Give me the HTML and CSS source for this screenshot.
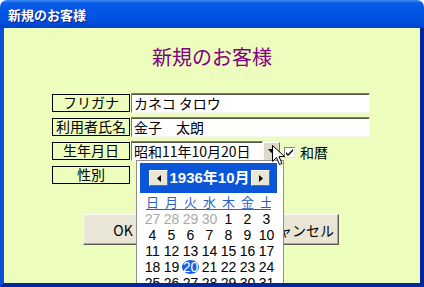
FILE: index.html
```html
<!DOCTYPE html>
<html lang="ja">
<head>
    <meta charset="UTF-8">
    <meta name="viewport" content="width=device-width, initial-scale=1.0">
    <title>新規のお客様</title>
    <link rel="stylesheet" href="styles.css">
</head>
<body>

<div class="window">
    <div class="titlebar">新規のお客様</div>

    <div class="content">
        <h1>新規のお客様</h1>

        <!-- 入力フォーム -->
        <div class="form">
            <div class="row">
                <div class="label">フリガナ</div>
                <input type="text" class="field" value="カネコ タロウ">
            </div>
            <div class="row">
                <div class="label">利用者氏名</div>
                <input type="text" class="field" value="金子　太朗">
            </div>
            <div class="row">
                <div class="label">生年月日</div>
                <input type="text" class="field date" value="昭和11年10月20日">
                <div class="drop">
                    <svg width="7" height="4" viewBox="0 0 7 4"><path d="M0 0h7L3.5 4z" fill="#000"/></svg>
                </div>
                <div class="check">
                    <svg width="9" height="9" viewBox="0 0 9 9"><path d="M1 4l2 2 5-5v2L3 8 1 6z" fill="#000"/></svg>
                </div>
                <span class="check-text">和暦</span>
            </div>
            <div class="row">
                <div class="label">性別</div>
            </div>
        </div>

        <div class="buttons">
            <button class="btn">OK</button>
            <button class="btn">キャンセル</button>
        </div>

        <!-- カレンダー -->
        <div class="calendar">
            <div class="cal-head">
                <div class="arrow">
                    <svg width="4" height="7" viewBox="0 0 4 7"><path d="M4 0v7L0 3.5z" fill="#000"/></svg>
                </div>
                <span class="cal-title">1936年10月</span>
                <div class="arrow">
                    <svg width="4" height="7" viewBox="0 0 4 7"><path d="M0 0v7l4-3.5z" fill="#000"/></svg>
                </div>
            </div>
            <div class="week">
                <span>日</span><span>月</span><span>火</span><span>水</span><span>木</span><span>金</span><span>土</span>
            </div>
            <div class="days">
                <span class="other">27</span><span class="other">28</span><span class="other">29</span><span class="other">30</span><span>1</span><span>2</span><span>3</span>
                <span>4</span><span>5</span><span>6</span><span>7</span><span>8</span><span>9</span><span>10</span>
                <span>11</span><span>12</span><span>13</span><span>14</span><span>15</span><span>16</span><span>17</span>
                <span>18</span><span>19</span><span><b class="today">20</b></span><span>21</span><span>22</span><span>23</span><span>24</span>
                <span>25</span><span>26</span><span>27</span><span>28</span><span>29</span><span>30</span><span>31</span>
            </div>
        </div>
    </div>

    <!-- マウスカーソル -->
    <svg class="cursor" width="13" height="21" viewBox="0 0 13 21">
        <path d="M0.5 0.5v16l4-4 3 7 2.5-1-3-7h5.5z" fill="#fff" stroke="#000" stroke-width="1"/>
    </svg>
</div>

</body>
</html>
```

FILE: styles.css
```css
html, body {
    margin: 0;
    padding: 0;
    background: #fff;
}
body {
    font-family: "Noto Sans CJK JP", "Liberation Sans", sans-serif;
    font-size: 14px;
}
.window {
    position: relative;
    width: 424px;
    height: 287px;
    display: flex;
    flex-direction: column;
    border-radius: 7px 7px 0 0;
    overflow: hidden;
}
.titlebar {
    height: 28px;
    flex-shrink: 0;
    padding-left: 8px;
    line-height: 29px;
    color: #fff;
    font-size: 13px;
    font-weight: bold;
    text-shadow: 1px 1px 0 #0a1f8a;
    background: linear-gradient(#3d8ef6 0, #0a5de4 3px, #0055e5 40%, #004fdc 80%, #0041c4 100%);
}
.content {
    position: relative;
    flex: 1;
    overflow: hidden;
    background: #edfdbe;
    border-style: solid;
    border-width: 0 4px 4px 4px;
    border-color: #0040c8 #00249c #00289c #0a4fd8;
}
h1 {
    margin: 0;
    padding-top: 17px;
    text-align: center;
    font-size: 20px;
    line-height: 24px;
    font-weight: normal;
    color: #800080;
}
.form {
    margin: 24px 0 0 48px;
    display: flex;
    flex-direction: column;
    gap: 4px;
}
.row {
    height: 20px;
    display: flex;
    align-items: center;
}
.label {
    width: 78px;
    height: 18px;
    box-sizing: border-box;
    border: 1px solid #000;
    margin-right: 1px;
    text-align: center;
    line-height: 15px;
}
.field {
    width: 239px;
    height: 20px;
    box-sizing: border-box;
    margin: 0;
    padding: 0 2px;
    font-family: "Noto Sans CJK JP", sans-serif;
    font-size: 14px;
    color: #000;
    background: #fff;
    border: 1px solid;
    border-color: #7c7c70 #f6f6ef #f6f6ef #7c7c70;
    box-shadow: inset 0 1px 0 #55554c;
    outline: none;
}
.field.date {
    width: 132px;
}
.drop {
    width: 17px;
    height: 19px;
    box-sizing: border-box;
    display: flex;
    align-items: center;
    justify-content: center;
    background: #ddd9c8;
    border: 1px solid;
    border-color: #fff #716f64 #716f64 #fff;
}
.check {
    width: 11px;
    height: 11px;
    margin: 3px 0 0 4px;
    box-sizing: border-box;
    display: flex;
    align-items: center;
    justify-content: center;
    background: #fff;
    border: 1px solid;
    border-color: #808080 #e0e0e0 #e0e0e0 #808080;
}
.check-text {
    margin: 2px 0 0 5px;
}
.buttons {
    margin-top: 29px;
    display: flex;
    justify-content: center;
    gap: 96px;
    padding-right: 2px;
}
.btn {
    width: 80px;
    height: 31px;
    padding: 0;
    font-family: "Noto Sans CJK JP", sans-serif;
    font-size: 14px;
    color: #000;
    background: #e9e6d6;
    border: 1px solid;
    border-color: #fbfaf5 #5e5c52 #5e5c52 #fbfaf5;
    box-shadow: inset -1px -1px 0 #aca899;
}
.calendar {
    position: absolute;
    left: 132px;
    top: 132px;
    width: 148px;
    height: 140px;
    box-sizing: border-box;
    padding: 2px 6px 0 3px;
    background: #fff;
    border: 1px solid #8f8f8f;
}
.cal-head {
    height: 30px;
    display: flex;
    align-items: center;
    justify-content: space-between;
    padding: 0 7px 0 9px;
    background: #0a55d8;
}
.arrow {
    width: 19px;
    height: 16px;
    box-sizing: border-box;
    display: flex;
    align-items: center;
    justify-content: center;
    background: #e9e6d6;
    border: 1px solid;
    border-color: #fff #716f64 #716f64 #fff;
}
.cal-title {
    color: #fff;
    font-family: "Liberation Sans", "Noto Sans CJK JP", sans-serif;
    font-weight: bold;
    font-size: 15px;
    line-height: 18px;
}
.week {
    display: grid;
    grid-template-columns: repeat(7, 19px);
    margin: 2px 3px 0 3px;
    height: 14px;
    line-height: 14px;
    font-size: 13px;
    color: #2762c8;
    text-align: center;
    box-shadow: 0 1px 0 #2762c8;
    clip-path: inset(0 3px -1px 3px);
}
.days {
    display: grid;
    grid-template-columns: repeat(7, 19px);
    margin: 2px 0 0 3px;
    font-family: "Liberation Sans", sans-serif;
    font-size: 14px;
    line-height: 16px;
    text-align: center;
}
.days .other {
    color: #a8a8a8;
}
.today {
    display: inline-block;
    font-weight: normal;
    color: #fff;
    background: #1a5fdc;
    border-radius: 50%;
    padding: 0 1px;
    line-height: 14px;
}
.cursor {
    position: absolute;
    left: 272px;
    top: 145px;
}
```
